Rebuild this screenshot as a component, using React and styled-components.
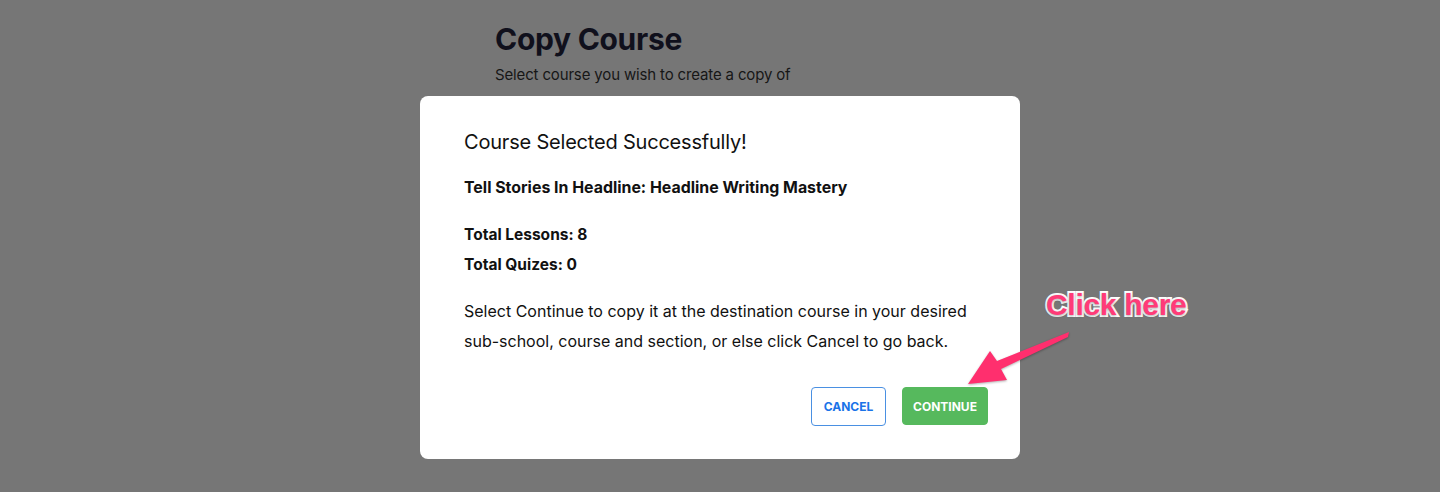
import React from "react";
import styled, { createGlobalStyle } from "styled-components";

const GlobalStyle = createGlobalStyle`
  html, body {
    margin: 0;
    padding: 0;
    height: 100%;
    background: #767676;
    font-family: Inter, "Liberation Sans", Arial, sans-serif;
  }
  * { box-sizing: border-box; }
`;

const Page = styled.div`
  position: relative;
  width: 1440px;
  height: 492px;
  background: #767676;
  overflow: hidden;
`;

const Header = styled.header`
  padding: 20px 0 0 495px;
`;

const PageTitle = styled.h1`
  margin: 0;
  font-size: 30px;
  line-height: 38px;
  font-weight: 700;
  letter-spacing: -0.3px;
  color: #10101c;
`;

const PageSubtitle = styled.p`
  margin: 7px 0 0;
  font-size: 15px;
  line-height: 20px;
  letter-spacing: -0.15px;
  color: #161616;
`;

const Modal = styled.div`
  position: absolute;
  top: 96px;
  left: 420px;
  width: 600px;
  background: #ffffff;
  border-radius: 8px;
  padding: 32px 32px 33px 44px;
  display: flex;
  flex-direction: column;
`;

const ModalTitle = styled.h2`
  margin: 0;
  font-size: 20px;
  line-height: 28px;
  font-weight: 400;
  letter-spacing: -0.2px;
  color: #111;
`;

const CourseName = styled.p`
  margin: 20px 0 0;
  font-size: 15.9px;
  line-height: 24px;
  font-weight: 700;
  color: #111;
`;

const Stats = styled.div`
  margin-top: 20px;
  display: flex;
  flex-direction: column;
`;

const Stat = styled.span`
  font-size: 15.5px;
  line-height: 30px;
  font-weight: 700;
  color: #111;
`;

const Message = styled.p`
  margin: 16px 0 0;
  font-size: 16px;
  line-height: 30px;
  color: #111;
  max-width: 530px;
`;

const Actions = styled.div`
  margin-top: 31px;
  display: flex;
  justify-content: flex-end;
  align-items: flex-start;
  gap: 16px;
`;

const Button = styled.button`
  font-family: inherit;
  font-size: 12px;
  font-weight: 700;
  border-radius: 4px;
  cursor: pointer;
  padding: 0;
  width: ${(p) => (p.$primary ? "86px" : "75px")};
  height: ${(p) => (p.$primary ? "38px" : "39px")};
  border: 1px solid ${(p) => (p.$primary ? "#56b95d" : "#4a90e2")};
  background: ${(p) => (p.$primary ? "#56b95d" : "#ffffff")};
  color: ${(p) => (p.$primary ? "#ffffff" : "#1a73e8")};
`;

const Callout = styled.span`
  position: absolute;
  left: 1046px;
  top: 286px;
  font-family: "Liberation Sans", Arial, sans-serif;
  font-size: 30px;
  line-height: 38px;
  font-weight: 700;
  color: #ff3b78;
  letter-spacing: -0.3px;
  -webkit-text-stroke: 4px #ffffff;
  paint-order: stroke fill;
  text-shadow: 0 1px 3px rgba(0, 0, 0, 0.35);
`;

const Arrow = styled.svg`
  position: absolute;
  left: 0;
  top: 0;
  width: 1440px;
  height: 492px;
  pointer-events: none;
  filter: drop-shadow(0 1px 1px rgba(0, 0, 0, 0.3));
`;

export default function App() {
  return (
    <>
      <GlobalStyle />
      <Page>
        <Header>
          <PageTitle>Copy Course</PageTitle>
          <PageSubtitle>Select course you wish to create a copy of</PageSubtitle>
        </Header>

        <Modal>
          <ModalTitle>Course Selected Successfully!</ModalTitle>
          <CourseName>Tell Stories In Headline: Headline Writing Mastery</CourseName>
          <Stats>
            <Stat>Total Lessons: 8</Stat>
            <Stat>Total Quizes: 0</Stat>
          </Stats>
          <Message>
            Select Continue to copy it at the destination course in your desired
            sub-school, course and section, or else click Cancel to go back.
          </Message>
          <Actions>
            <Button>CANCEL</Button>
            <Button $primary>CONTINUE</Button>
          </Actions>
        </Modal>

        <Callout>Click here</Callout>
        <Arrow viewBox="0 0 1440 492">
          <path
            d="M1069 332 L1068 337 L1001 369 L1007 380 L968 384 L990 351 L997 361 Z"
            fill="#ff2f6e"
          />
        </Arrow>
      </Page>
    </>
  );
}
